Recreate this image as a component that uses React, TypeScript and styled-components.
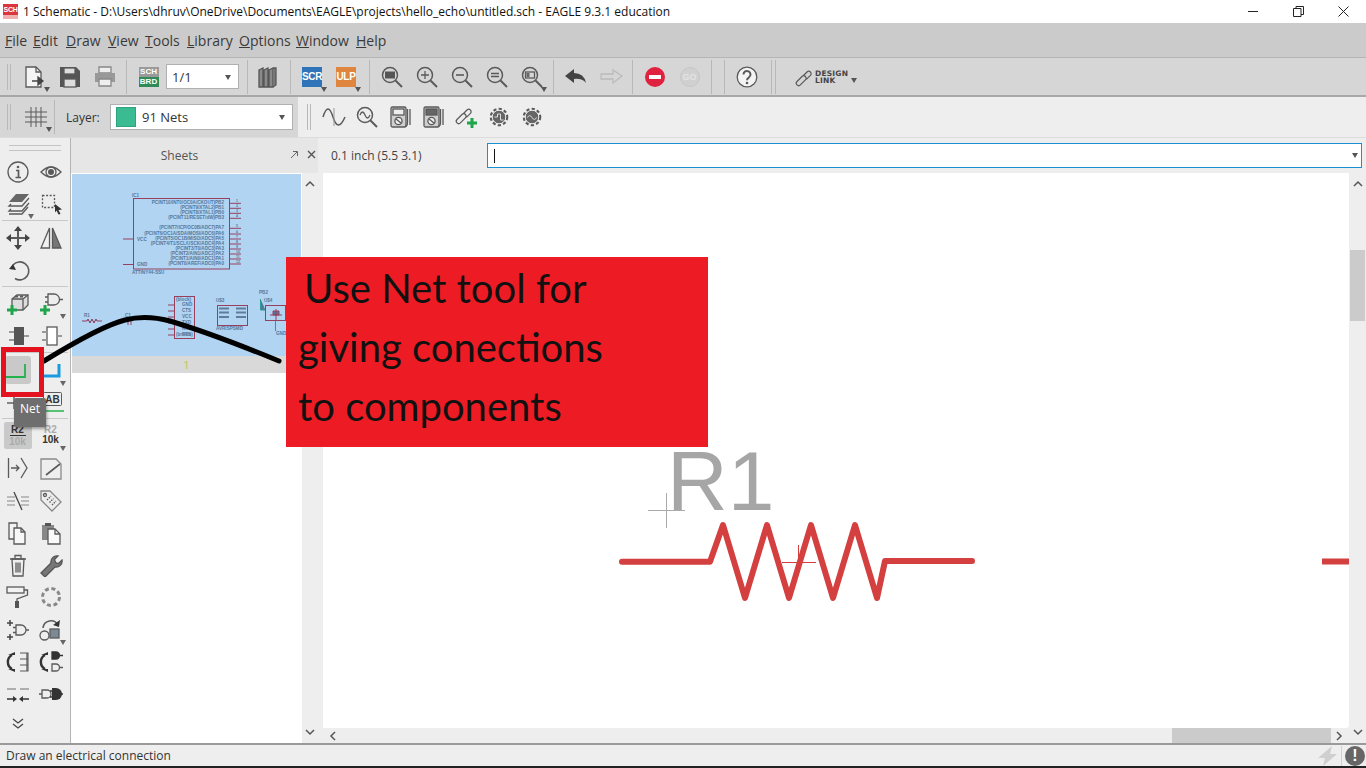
import { FC, ReactNode } from 'react'
import styled, { createGlobalStyle } from 'styled-components'

const UI_FONT = '"Open Sans", "Noto Sans", "Liberation Sans", sans-serif'

const GlobalStyle = createGlobalStyle`
  html, body {
    margin: 0;
    padding: 0;
    background: #eeeeee;
    overflow: hidden;
  }
  * {
    box-sizing: border-box;
  }
`

const Window = styled.div`
  position: relative;
  width: 1366px;
  height: 768px;
  display: flex;
  flex-direction: column;
  overflow: hidden;
  background: #eeeeee;
  color: #333;
  font-family: ${UI_FONT};
`

/* title bar */
const TitleBar = styled.div`
  height: 23px;
  flex: none;
  background: #fff;
  display: flex;
  align-items: center;
  padding-left: 3px;
`
const AppIcon = styled.div`
  width: 15px;
  height: 15px;
  margin-right: 5px;
  background: #d9363e;
  color: #fff;
  font-size: 7px;
  font-weight: 700;
  line-height: 11px;
  letter-spacing: -0.3px;
  text-align: center;
  border-bottom: 4px solid #f0b0b0;
  font-family: 'Liberation Sans', sans-serif;
`
const TitleText = styled.div`
  font-size: 12px;
  color: #111;
  white-space: nowrap;
`
const WindowButtons = styled.div`
  margin-left: auto;
  display: flex;
  height: 100%;
`
const WindowButton = styled.div`
  width: 45px;
  display: flex;
  align-items: center;
  justify-content: center;
`

/* menu */
const MenuBar = styled.div`
  height: 35px;
  flex: none;
  background: #cbcbcb;
  display: flex;
  align-items: center;
  padding-left: 5px;
  border-bottom: 1px solid #b4b4b4;
`
const MenuItem = styled.div<{ $w: number }>`
  width: ${({ $w }) => $w}px;
  font-size: 14px;
  color: #3a3a3a;
`

/* toolbars */
const Toolbar = styled.div`
  height: 39px;
  flex: none;
  background: #d6d6d6;
  display: flex;
  align-items: center;
  border-bottom: 2px solid #a8a8a8;
`
const SecondRow = styled.div`
  height: 41px;
  flex: none;
  display: flex;
  background: #eeeeee;
  border-bottom: 1px solid #dcdcdc;
`
const SecondLeft = styled.div`
  width: 298px;
  background: #d6d6d6;
  display: flex;
  align-items: center;
`
const SecondRight = styled.div`
  flex: 1;
  margin-left: 2px;
  display: flex;
  align-items: center;
`
const Grip = styled.div`
  width: 4px;
  height: 26px;
  margin-left: 7px;
  margin-right: 6px;
  flex: none;
  border-left: 1px solid #b8b8b8;
  border-right: 1px solid #b8b8b8;
`
const Sep = styled.div<{ $l?: number; $r?: number }>`
  width: 1px;
  height: 34px;
  flex: none;
  background: #b8b8b8;
  margin-left: ${({ $l }) => $l ?? 4}px;
  margin-right: ${({ $r }) => $r ?? 4}px;
`
const Tool = styled.div<{ $w?: number; $drop?: boolean }>`
  position: relative;
  width: ${({ $w }) => $w ?? 35}px;
  height: 30px;
  flex: none;
  display: flex;
  align-items: center;
  justify-content: center;
  ${({ $drop }) =>
    $drop &&
    `&::after {
      content: '';
      position: absolute;
      right: 2px;
      bottom: 0;
      border-left: 3.5px solid transparent;
      border-right: 3.5px solid transparent;
      border-top: 5px solid #555;
    }`}
`
const Combo = styled.div<{ $w: number; $h: number }>`
  position: relative;
  width: ${({ $w }) => $w}px;
  height: ${({ $h }) => $h}px;
  flex: none;
  background: #fff;
  border: 1px solid #b0b0b0;
  display: flex;
  align-items: center;
  font-size: 13px;
  color: #333;
  padding-left: 5px;
  &::after {
    content: '';
    position: absolute;
    right: 7px;
    top: 50%;
    margin-top: -2px;
    border-left: 3.5px solid transparent;
    border-right: 3.5px solid transparent;
    border-top: 5px solid #555;
  }
`
const Swatch = styled.span`
  width: 20px;
  height: 20px;
  margin-right: 6px;
  background: #3bbb91;
  border: 1px solid #2ea37d;
`
const LayerLabel = styled.div`
  font-size: 12px;
  color: #333;
  width: 44px;
  margin-left: 11px;
`
const Badge = styled.div<{ $bg: string }>`
  width: 20px;
  height: 20px;
  background: ${({ $bg }) => $bg};
  color: #fff;
  font-size: 10px;
  font-weight: 700;
  display: flex;
  align-items: center;
  justify-content: center;
  font-family: 'Liberation Sans', sans-serif;
  letter-spacing: -0.3px;
`
const SchBrd = styled.div`
  width: 20px;
  height: 20px;
  display: flex;
  flex-direction: column;
  color: #fff;
  font-family: 'Liberation Sans', sans-serif;
  font-size: 8px;
  font-weight: 700;
  line-height: 10px;
  text-align: center;
`
const SchTop = styled.div`
  background: #9a9a9a;
`
const SchBottom = styled.div`
  background: #2e8b57;
`
const RoundStop = styled.div`
  width: 20px;
  height: 20px;
  border-radius: 50%;
  background: #e0213f;
  display: flex;
  align-items: center;
  justify-content: center;
  &::before {
    content: '';
    width: 12px;
    height: 4px;
    background: #fff;
  }
`
const RoundGo = styled.div`
  width: 20px;
  height: 20px;
  border-radius: 50%;
  background: #d0d0d0;
  border: 1px solid #c6c6c6;
  color: #e4e4e4;
  font-size: 9px;
  font-weight: 700;
  display: flex;
  align-items: center;
  justify-content: center;
  font-family: 'Liberation Sans', sans-serif;
`
const DesignLink = styled.div`
  display: flex;
  align-items: center;
  margin-left: 14px;
  position: relative;
`
const DesignText = styled.div`
  font-family: 'DejaVu Sans', sans-serif;
  font-size: 7.5px;
  font-weight: 700;
  line-height: 7px;
  color: #444;
  margin-left: 3px;
  width: 36px;
  letter-spacing: 0.2px;
`
const SmallCaret = styled.span`
  border-left: 3.5px solid transparent;
  border-right: 3.5px solid transparent;
  border-top: 5px solid #555;
  margin-top: 7px;
`

/* body */
const Body = styled.div`
  flex: 1;
  min-height: 0;
  display: flex;
`
const LeftTools = styled.div`
  width: 71px;
  flex: none;
  background: #eeeeee;
  border-right: 1px solid #b4b4b4;
  padding-top: 7px;
  display: flex;
  flex-direction: column;
`
const ToolGrip = styled.div`
  height: 6px;
  margin: 0 9px 4px;
  border-top: 1px solid #c4c4c4;
  border-bottom: 1px solid #c4c4c4;
`
const ToolRow = styled.div<{ $h: number; $sep?: boolean }>`
  height: ${({ $h }) => $h}px;
  flex: none;
  display: flex;
  padding-left: 1px;
  align-items: center;
  ${({ $sep }) => $sep && 'border-bottom: 1px solid #c8c8c8; margin: 0 2px; padding-left: 0;'}
`
const LeftTool = styled.div<{ $active?: boolean; $drop?: boolean }>`
  position: relative;
  width: 33px;
  height: 100%;
  display: flex;
  align-items: center;
  justify-content: center;
  ${({ $drop }) =>
    $drop &&
    `&::after {
      content: '';
      position: absolute;
      right: 1px;
      bottom: 1px;
      border-left: 3px solid transparent;
      border-right: 3px solid transparent;
      border-top: 5px solid #666;
    }`}
`
const ActiveBack = styled.div`
  width: 26px;
  height: 28px;
  border-radius: 3px;
  background: #c9c9c9;
  display: flex;
  align-items: center;
  justify-content: center;
`
const ValueTool = styled.div<{ $on?: boolean }>`
  width: 28px;
  height: 27px;
  border-radius: 2px;
  background: ${({ $on }) => ($on ? '#c9c9c9' : 'transparent')};
  font-family: 'Liberation Sans', sans-serif;
  font-size: 10px;
  font-weight: 700;
  line-height: 10px;
  text-align: center;
  padding-top: 3px;
`
const ValueLine = styled.div<{ $c: string; $line?: boolean }>`
  color: ${({ $c }) => $c};
  ${({ $line }) => $line && 'border-bottom: 1px solid #333; margin: 0 6px 1px;'}
`

const SheetsPanel = styled.div`
  width: 247px;
  flex: none;
  display: flex;
  flex-direction: column;
  background: #eeeeee;
`
const SheetsHeader = styled.div`
  position: relative;
  height: 35px;
  flex: none;
  display: flex;
  align-items: center;
  justify-content: center;
  font-size: 12px;
  color: #555;
  padding-right: 30px;
  background: #e6e6e6;
`
const SheetsActions = styled.div`
  position: absolute;
  right: 2px;
  top: 12px;
  display: flex;
  gap: 8px;
`
const SheetsBody = styled.div`
  flex: 1;
  display: flex;
  min-height: 0;
`
const SheetList = styled.div`
  flex: 1;
  background: #fff;
  padding: 1px 1px 0 1px;
`
const SheetThumb = styled.div`
  height: 182px;
  background: #b0d4f2;
`
const SheetLabel = styled.div`
  height: 17px;
  background: #d9d9d9;
  color: #b8c84a;
  font-size: 11px;
  line-height: 17px;
  text-align: center;
`
const VScroll = styled.div<{ $w: number }>`
  width: ${({ $w }) => $w}px;
  flex: none;
  position: relative;
  display: flex;
  flex-direction: column;
  justify-content: space-between;
  align-items: center;
  padding: 6px 0;
  background: #eeeeee;
`
const VThumb = styled.div`
  position: absolute;
  left: 1px;
  right: 1px;
  top: 77px;
  height: 71px;
  background: #cbcbcb;
`

const RightColumn = styled.div`
  flex: 1;
  min-width: 0;
  display: flex;
  flex-direction: column;
  padding-left: 5px;
`
const CommandRow = styled.div`
  height: 35px;
  flex: none;
  display: flex;
  align-items: center;
  padding-left: 8px;
  font-size: 12px;
  color: #444;
`
const Coordinates = styled.div`
  width: 156px;
  flex: none;
`
const CommandInput = styled.div`
  position: relative;
  width: 875px;
  height: 25px;
  flex: none;
  background: #fff;
  border: 1px solid #1a8fd1;
  display: flex;
  align-items: center;
  padding-left: 6px;
  &::before {
    content: '';
    width: 1px;
    height: 14px;
    background: #111;
  }
  &::after {
    content: '';
    position: absolute;
    right: 3px;
    top: 9px;
    border-left: 3.5px solid transparent;
    border-right: 3.5px solid transparent;
    border-top: 5px solid #555;
  }
`
const CanvasArea = styled.div`
  flex: 1;
  min-height: 0;
  display: flex;
`
const CanvasColumn = styled.div`
  flex: 1;
  min-width: 0;
  display: flex;
  flex-direction: column;
`
const Canvas = styled.div`
  flex: 1;
  min-height: 0;
  background: #fff;
  border-bottom-right-radius: 3px;
`
const CanvasSvg = styled.svg`
  display: block;
`
const HScroll = styled.div`
  height: 15px;
  flex: none;
  position: relative;
  display: flex;
  align-items: center;
  justify-content: space-between;
  padding: 0 5px;
`
const HThumb = styled.div`
  position: absolute;
  left: 849px;
  top: 0;
  width: 159px;
  height: 15px;
  background: #cbcbcb;
`

const StatusBar = styled.div`
  height: 23px;
  flex: none;
  display: flex;
  align-items: center;
  padding-left: 6px;
  font-size: 12px;
  color: #333;
  background: #eeeeee;
  border-top: 2px solid #9a9a9a;
`
const StatusEnd = styled.div`
  margin-left: auto;
  display: flex;
  align-items: center;
  margin-right: 1px;
`
const StatusDivider = styled.div`
  width: 1px;
  height: 20px;
  background: #d0d0d0;
  margin: 0 3px 0 3px;
`
const WarnDot = styled.div`
  width: 20px;
  height: 20px;
  border-radius: 50%;
  background: #666;
  color: #fff;
  font-size: 16px;
  font-weight: 700;
  text-align: center;
  line-height: 20px;
  font-family: 'Liberation Sans', sans-serif;
`
const BlackEdge = styled.div`
  height: 2px;
  flex: none;
  background: #222;
`

/* annotation drawn over the screenshot */
const Callout = styled.div`
  position: absolute;
  left: 286px;
  top: 257px;
  width: 422px;
  height: 190px;
  background: #ed1c24;
  color: #111;
  font-family: Lato, 'Open Sans', sans-serif;
  font-size: 40px;
  line-height: 59px;
  padding: 2px 0 0 12px;
`
const CalloutFirst = styled.div`
  padding-left: 6px;
`
const RedFrame = styled.div`
  position: absolute;
  left: 1px;
  top: 347px;
  width: 43px;
  height: 50px;
  border: 5px solid #e3121e;
`
const NetTip = styled.div`
  position: absolute;
  left: 14px;
  top: 398px;
  width: 32px;
  height: 29px;
  border-radius: 2px;
  background: #6e6e6e;
  color: #fff;
  font-size: 12px;
  line-height: 22px;
  text-align: center;
  box-shadow: 1px 2px 3px rgba(0, 0, 0, 0.35);
`
const CurveSvg = styled.svg`
  position: absolute;
  left: 0;
  top: 0;
  pointer-events: none;
`

/* icons */
const G = '#5a5a5a'
const Ico: FC<{ w?: number; h?: number; children: ReactNode }> = ({ w = 24, h = 24, children }) => (
  <svg width={w} height={h} viewBox={`0 0 ${w} ${h}`} fill="none" stroke={G} strokeWidth="1.3">
    {children}
  </svg>
)
const Plus: FC<{ x: number; y: number }> = ({ x, y }) => (
  <path d={`M${x - 5} ${y}h10M${x} ${y - 5}v10`} stroke="#1fa64a" strokeWidth="3" />
)
const Lens: FC<{ children?: ReactNode }> = ({ children }) => (
  <Ico>
    <circle cx="10" cy="10" r="7.5" strokeWidth="1.5" />
    <path d="M15.5 15.5L22 22" strokeWidth="2" />
    {children}
  </Ico>
)
const Gate: FC<{ x: number; y: number; fill?: string }> = ({ x, y, fill = 'none' }) => (
  <path
    d={`M${x} ${y}h5a5 5 0 0 1 0 10h-5zM${x + 10} ${y + 5}h3M${x - 3} ${y + 2.5}h3M${x - 3} ${y + 7.5}h3`}
    fill={fill}
  />
)
const Meter: FC<{ wave?: boolean }> = ({ wave }) => (
  <Ico>
    <rect x="3" y="2" width="15" height="20" rx="1.5" fill="#cfcfcf" />
    <rect x="5" y="4" width="11" height="6" fill={wave ? '#666' : '#eee'} />
    <circle cx="10.5" cy="16" r="3.6" fill="#eee" />
    <path d="M8 14l5 4M19.5 4v14q0 3 -3 4M22 4v16" />
  </Ico>
)
const Chain: FC = () => (
  <>
    <path
      d="M3 14.5l5-5a2.4 2.4 0 0 1 3.4 3.4l-5 5a2.4 2.4 0 0 1-3.4-3.4zM9 9l4-4a2.4 2.4 0 0 1 3.4 3.4l-4 4"
      strokeWidth="1.2"
    />
  </>
)
const GearIcon: FC<{ wave?: boolean }> = ({ wave }) => (
  <Ico>
    <circle cx="12" cy="12" r="8" strokeWidth="2.6" strokeDasharray="3.1 2.2" />
    <circle cx="12" cy="12" r="6.8" fill="#666" stroke="#eee" strokeWidth="1" />
    <path d={wave ? 'M7.5 12.5q2-4 4.5 0t4.500 0' : 'M7.500 12h3v-3h3v6h3'} stroke="#ddd" strokeWidth="1" />
  </Ico>
)

const icons: Record<string, ReactNode> = {
  info: (
    <Ico>
      <circle cx="12" cy="12" r="10" />
      <path d="M10 10.500h2.500v7M9.500 17.500h5.500" strokeWidth="1.700" />
      <circle cx="12" cy="7" r="1.300" fill={G} stroke="none" />
    </Ico>
  ),
  eye: (
    <Ico>
      <path d="M2 12q10-10 20 0q-10 10-20 0z" strokeWidth="1.400" />
      <circle cx="12" cy="12" r="5" strokeWidth="1.300" />
      <circle cx="12" cy="12" r="3" fill={G} stroke="none" />
    </Ico>
  ),
  layers: (
    <Ico>
      <path d="M9 2h13l-7 8H2z" fill="#666" stroke="none" />
      <path d="M4 12l-2 2h13l7-8M4 17l-2 2h13l7-8" />
      <path d="M2 22h13l6-7" />
    </Ico>
  ),
  select: (
    <Ico>
      <rect x="2.500" y="3.500" width="12" height="12" strokeDasharray="2 1.600" />
      <path d="M15 12l7 5.500-3.500.5 2 4-2 .5-2-4-1.500 2z" fill="#333" stroke="none" />
    </Ico>
  ),
  move: (
    <Ico>
      <path d="M12 3v18M3 12h18" strokeWidth="2" />
      <path d="M12 0l4 5H8zM12 24l4-5H8zM0 12l5-4v8zM24 12l-5-4v8z" fill="#444" stroke="none" />
    </Ico>
  ),
  mirror: (
    <Ico>
      <path d="M10.500 2v20H2z" fill="#f0f0f0" />
      <path d="M13.500 2v20H22z" fill="#777" />
    </Ico>
  ),
  rotate: (
    <Ico>
      <path d="M6 7a9 9 0 1 1 2 13.500" strokeWidth="1.600" />
      <path d="M2 11l7 1-3-6z" fill="#333" stroke="none" />
    </Ico>
  ),
  addPart: (
    <Ico>
      <path d="M6 7l5-4h11v10l-5 5H6z" fill="#ddd" />
      <path d="M6 7h11v11M17 7l5-4" />
      <path d="M9 4.500h3M14 4.500h3" strokeWidth="2" />
      <Plus x={6} y={18} />
    </Ico>
  ),
  addGate: (
    <Ico>
      <path d="M9 2h6a5.500 5.500 0 0 1 0 11H9zM20.500 7.500H24M6 5h3M6 10h3" />
      <Plus x={6} y={18} />
    </Ico>
  ),
  smash: (
    <Ico>
      <rect x="7" y="3" width="10" height="18" fill="#555" stroke="none" />
      <path d="M2 8h5M2 16h5M17 12h5" strokeWidth="2" stroke="#999" />
    </Ico>
  ),
  unsmash: (
    <Ico>
      <rect x="7" y="3" width="10" height="18" fill="#fff" />
      <path d="M2 8h5M2 16h5M17 12h5" strokeWidth="2" stroke="#999" />
    </Ico>
  ),
  net: (
    <Ico>
      <path d="M0 19h19V6" stroke="#24b24e" strokeWidth="1.800" />
    </Ico>
  ),
  bus: (
    <Ico>
      <path d="M1 18h19V6" stroke="#1a9be0" strokeWidth="3" />
    </Ico>
  ),
  junction: (
    <Ico>
      <path d="M0 12h24" strokeWidth="1.400" />
      <path d="M7 6v12" strokeWidth="1.400" />
    </Ico>
  ),
  label: (
    <svg width="24" height="24" viewBox="0 0 24 24" fill="none">
      <rect x="3.500" y="1.500" width="18" height="13" rx="1" stroke={G} />
      <text x="12.500" y="12" textAnchor="middle" fontSize="10" fontWeight="700" fontFamily="Liberation Sans" fill="#333">
        AB
      </text>
      <path d="M0 20h24" stroke="#24b24e" strokeWidth="1.500" />
    </svg>
  ),
  pinswap: (
    <Ico>
      <path d="M2.500 2v20" />
      <path d="M5 12h8M10 9l3 3-3 3" />
      <path d="M15 2l6 10-6 10" />
    </Ico>
  ),
  slash: (
    <Ico>
      <path d="M2 3h15l5 5v15H2z" stroke="#8a8a8a" />
      <path d="M7 19l14-11" strokeWidth="1.600" />
    </Ico>
  ),
  split: (
    <Ico>
      <path d="M1 8h8M1 12h8M1 16h8M15 8h8M15 12h8M15 16h8" stroke="#aaa" />
      <path d="M8 3l8 18" stroke="#444" />
    </Ico>
  ),
  tag: (
    <Ico>
      <path d="M2 2h9l11 11-9 9L2 11z" stroke="#888" />
      <circle cx="6" cy="6" r="1.500" />
      <path d="M8 11l4-4M10.500 13.500l4-4M13 16l4-4" strokeDasharray="1.500 1" />
    </Ico>
  ),
  copy: (
    <Ico>
      <path d="M3 2h8v16H3z" fill="#f2f2f2" />
      <path d="M8 7h7l4 4v12H8z" fill="#f7f7f7" />
      <path d="M15 7v4h4" />
    </Ico>
  ),
  paste: (
    <Ico>
      <path d="M3 4h12v15H3z" fill="#888" stroke="none" />
      <path d="M6 2h6v3H6z" fill="#555" stroke="none" />
      <path d="M9 8h7l5 5v10H9z" fill="#fafafa" />
      <path d="M16 8v5h5" />
    </Ico>
  ),
  trash: (
    <Ico>
      <path d="M4 6h16M9 5V2.500h6V5" />
      <path d="M6 6l1 17h10l1-17z" />
      <path d="M10 9.500v10M12 9.500v10M14 9.500v10" />
    </Ico>
  ),
  wrench: (
    <Ico>
      <path
        d="M2 20l10-10a6 6 0 0 1 7-7l-3.500 3.500 1 3 3 1 3.500-3.500a6 6 0 0 1-7 7L6 24z"
        fill="#777"
        stroke="#555"
      />
    </Ico>
  ),
  roller: (
    <Ico>
      <rect x="1" y="2" width="17" height="6" fill="#f2f2f2" />
      <path d="M18 5h3.500v5L11 14v3" />
      <rect x="9" y="16" width="4" height="7" fill="#555" stroke="none" />
    </Ico>
  ),
  circleDots: (
    <Ico>
      <circle cx="12" cy="12" r="8.500" stroke="#888" strokeWidth="3" strokeDasharray="4 2.700" />
    </Ico>
  ),
  addGates: (
    <Ico>
      <path d="M1 5h6M4 2v6M1 19h6M4 16v6" stroke="#444" strokeWidth="1.500" />
      <path d="M10 7h5a5 5 0 0 1 0 10h-5zM20 12h3M7 9.500h3M7 14.500h3" />
    </Ico>
  ),
  rotGroup: (
    <Ico>
      <path d="M4 10a8 8 0 0 1 15-3" strokeWidth="1.600" />
      <path d="M21 2l-1 7-6-2z" fill="#333" stroke="none" />
      <circle cx="5.500" cy="17.500" r="4.500" />
      <rect x="11" y="11" width="9" height="9" fill="#7a8a96" />
    </Ico>
  ),
  swapPins: (
    <Ico>
      <path d="M6 5a8 8 0 0 0 0 14" strokeWidth="2.400" stroke="#333" />
      <path d="M2 5h7v-3zM2 19h7v3z" fill="#333" stroke="none" />
      <path d="M14 3h8v18h-8M14 9h8M14 15h8" strokeWidth="1.100" />
      <path d="M21 3v18" />
    </Ico>
  ),
  swapGates: (
    <Ico>
      <path d="M6 5a8 8 0 0 0 0 14" strokeWidth="2.400" stroke="#333" />
      <path d="M2 5h7v-3zM2 19h7v3z" fill="#333" stroke="none" />
      <path d="M13 2h4a3.500 3.500 0 0 1 0 7h-4zM21 5.500h3" fill="#333" stroke="#333" />
      <path d="M13 14h4a3.500 3.500 0 0 1 0 7h-4zM21 17.500h3" />
    </Ico>
  ),
  wireBreak: (
    <Ico>
      <path d="M1 7h9M14 7h9" stroke="#999" strokeWidth="1.500" />
      <path d="M1 17h8M23 17h-8" stroke="#333" />
      <path d="M11 17l-4-3v6zM13 17l4-3v6z" fill="#333" stroke="none" />
    </Ico>
  ),
  gateFill: (
    <Ico>
      <path d="M3 8h5a4 4 0 0 1 0 8H3zM0 12h3" />
      <path d="M13 6h4a6 6 0 0 1 0 12h-4z" fill="#333" stroke="none" />
      <path d="M22 12h2M11 9h2M11 15h2" stroke="#333" strokeWidth="1.500" />
    </Ico>
  ),
  chevrons: (
    <Ico h={14}>
      <path d="M7 2l5 4 5-4M7 7l5 4 5-4" stroke="#444" />
    </Ico>
  )
}

const leftRows: { h: number; sep?: boolean; a: string; b: string; dropA?: boolean; dropB?: boolean }[] = [
  { h: 33, a: 'info', b: 'eye' },
  { h: 33, sep: true, a: 'layers', b: 'select', dropA: true },
  { h: 33, a: 'move', b: 'mirror' },
  { h: 33, sep: true, a: 'rotate', b: '' },
  { h: 33, a: 'addPart', b: 'addGate', dropB: true },
  { h: 33, sep: true, a: 'smash', b: 'unsmash' },
  { h: 34, a: 'net', b: 'bus', dropB: true },
  { h: 32, sep: true, a: 'junction', b: 'label' },
  { h: 33, a: 'R2', b: 'R2v', dropB: true },
  { h: 32, a: 'pinswap', b: 'slash' },
  { h: 33, a: 'split', b: 'tag' },
  { h: 32, a: 'copy', b: 'paste' },
  { h: 32, a: 'trash', b: 'wrench' },
  { h: 32, a: 'roller', b: 'circleDots' },
  { h: 33, a: 'addGates', b: 'rotGroup', dropB: true },
  { h: 32, a: 'swapPins', b: 'swapGates' },
  { h: 32, a: 'wireBreak', b: 'gateFill' }
]

const renderLeftIcon = (name: string) => {
  if (name === 'R2')
    return (
      <ValueTool $on>
        <ValueLine $c="#333" $line>R2</ValueLine>
        <ValueLine $c="#aaa">10k</ValueLine>
      </ValueTool>
    )
  if (name === 'R2v')
    return (
      <ValueTool>
        <ValueLine $c="#aaa">R2</ValueLine>
        <ValueLine $c="#333">10k</ValueLine>
      </ValueTool>
    )
  if (name === 'net') return <ActiveBack>{icons.net}</ActiveBack>
  return icons[name] ?? null
}

const menus: [string, string, number][] = [
  ['F', 'ile', 28],
  ['E', 'dit', 33],
  ['D', 'raw', 42],
  ['V', 'iew', 37],
  ['T', 'ools', 42],
  ['L', 'ibrary', 52],
  ['O', 'ptions', 57],
  ['W', 'indow', 60],
  ['H', 'elp', 40]
]

const rightPins = [203.3, 208.3, 213.3, 218.3, 228.3, 234, 239, 244, 249, 254, 259, 264]
const pinNames = [
  'PCINT10/INT0/OC0A/CKOUT)PB2',
  '(PCINT9/XTAL2)PB1',
  '(PCINT8/XTAL1)PB0',
  '(PCINT11/RESET/dW)PB3',
  '(PCINT7/ICP/OC0B/ADC7)PA7',
  '(PCINT6/OC1A/SDA/MOSI/ADC6)PA6',
  '(PCINT5/OC1B/MISO/ADC5)PA5',
  '(PCINT4/T1/SCL/USCK/ADC4)PA4',
  '(PCINT3/T0/ADC3)PA3',
  '(PCINT2/AIN1/ADC2)PA2',
  '(PCINT1/AIN0/ADC1)PA1',
  '(PCINT0/AREF/ADC0)PA0'
]
const WINE = '#96405e'
const INK = '#55789c'

const Thumbnail: FC = () => (
  <CanvasSvg width="229" height="182" viewBox="72 174 229 182" fontFamily="Liberation Sans">
    <g fill={INK} fontSize="4.600" fontWeight="700">
      <rect x="133.500" y="198.500" width="96" height="70.500" fill="none" stroke={WINE} />
      {rightPins.map((y, i) => (
        <g key={y}>
          <path d={`M229 ${y}h12`} stroke={WINE} />
          <text x="224" y={y + 1} textAnchor="end">
            {pinNames[i]}
          </text>
          <text x="236" y={y - 1} fontSize="3.500">
            {i + 1}
          </text>
        </g>
      ))}
      <path d={`M123 239h10M123 264.500h10`} stroke={WINE} />
      <text x="137" y="241">VCC</text>
      <text x="137" y="266">GND</text>
      <text x="132" y="197">IC1</text>
      <text x="132" y="274">ATTINY44-SSU</text>
      <path d="M82 321h5l1-2 2 4 2-4 2 4 2-4 1 2h5" stroke={WINE} />
      <text x="84" y="317">R1</text>
      <text x="125" y="317">C1</text>
      <path d="M128 321v4M131 321v4" stroke={WINE} />
      <rect x="174.500" y="296.500" width="20" height="42" fill="none" stroke={WINE} />
      <text x="176" y="301">(block)</text>
      {['GND', 'CTS', 'VCC', 'TXD', 'RXD', 'RTS'].map((t, i) => (
        <g key={t}>
          <path d={`M168 ${305 + i * 6}h6`} stroke={WINE} />
          <text x="182" y={306 + i * 6}>{t}</text>
        </g>
      ))}
      <text x="176" y="336">(brown)</text>
      <rect x="217.500" y="305.500" width="30" height="20" fill="none" stroke={WINE} />
      <path d="M219 308.500h10M236 308.500h10M219 312.500h10M236 312.500h10M219 317h10M236 317h10" stroke="#5f7c9a" strokeWidth="2" />
      <text x="216" y="302">U$3</text>
      <text x="216" y="330">AVRISPSMD</text>
      <text x="259" y="294">PB2</text>
      <text x="264" y="302">U$4</text>
      <path d="M260.500 299v11h5" stroke="#2f9a8e" />
      <rect x="265.500" y="305.500" width="20" height="15" fill="none" stroke={WINE} />
      <path d="M270 315h12M276 309v12M273 311h6v4h-6z" stroke={WINE} />
      <path d="M275.500 321v10" stroke="#2f9a8e" />
      <text x="276" y="335">GND</text>
    </g>
  </CanvasSvg>
)

const ResistorCanvas: FC = () => (
  <CanvasSvg width="1026" height="554" viewBox="323 173 1026 554">
    <text x="667" y="510" fontFamily="Liberation Sans" fontSize="84" fill="#a6a6a6">
      R1
    </text>
    <path d="M648 510.500h37M666.500 493v35" stroke="#aaa" strokeWidth="1" />
    <path
      d="M622 561.700h88L723 525l22 73 22-73 22 73 22-73 22 73 22-73 22 73 8-37h87"
      stroke="#d43f3f"
      strokeWidth="6"
      strokeLinecap="round"
      strokeLinejoin="round"
      fill="none"
    />
    <path d="M782 562.500h34M798.500 545v17" stroke="#d43f3f" strokeWidth="1" />
    <path d="M1322 561.500h27" stroke="#d43f3f" strokeWidth="6" />
  </CanvasSvg>
)

const Arrow: FC<{ d: string }> = ({ d }) => (
  <svg width="10" height="10" viewBox="0 0 10 10" fill="none" stroke="#555" strokeWidth="1.500">
    <path d={d} />
  </svg>
)

const App: FC = () => (
  <Window>
    <GlobalStyle />
    <TitleBar>
      <AppIcon>SCH</AppIcon>
      <TitleText>
        1 Schematic - D:\Users\dhruv\OneDrive\Documents\EAGLE\projects\hello_echo\untitled.sch - EAGLE 9.3.1 education
      </TitleText>
      <WindowButtons>
        <WindowButton>
          <svg width="11" height="11" viewBox="0 0 11 11" stroke="#222" fill="none">
            <path d="M0 5.500h10" />
          </svg>
        </WindowButton>
        <WindowButton>
          <svg width="11" height="11" viewBox="0 0 11 11" stroke="#222" fill="none">
            <path d="M.500 2.500h7.500v8H.500zM3 2.500V.500h7.500v8H8" />
          </svg>
        </WindowButton>
        <WindowButton>
          <svg width="11" height="11" viewBox="0 0 11 11" stroke="#222" fill="none">
            <path d="M.500.500l10 10M10.500.500l-10 10" />
          </svg>
        </WindowButton>
      </WindowButtons>
    </TitleBar>

    <MenuBar>
      {menus.map(([key, rest, w]) => (
        <MenuItem key={key} $w={w}>
          <u>{key}</u>
          {rest}
        </MenuItem>
      ))}
    </MenuBar>

    <Toolbar>
      <Grip />
      <Tool $drop>
        <Ico>
          <path d="M3 2h10l5 5v15H3z" fill="#f4f4f4" />
          <path d="M13 2v5h5" />
          <path d="M9 16h9M15 12l5 4-5 4z" fill="#444" stroke="#444" />
        </Ico>
      </Tool>
      <Tool>
        <Ico>
          <path d="M2 2h16l4 4v16H2z" fill="#555" stroke="none" />
          <rect x="6" y="3" width="11" height="6" fill="#ddd" />
          <rect x="6" y="14" width="12" height="8" fill="#ddd" />
        </Ico>
      </Tool>
      <Tool>
        <Ico>
          <path d="M6 2h12v6H6z" fill="#eee" stroke="#888" />
          <path d="M2 8h20v9H2z" fill="#999" stroke="none" />
          <path d="M6 14h12v7H6z" fill="#eee" stroke="#888" />
        </Ico>
      </Tool>
      <Sep />
      <Tool>
        <SchBrd>
          <SchTop>SCH</SchTop>
          <SchBottom>BRD</SchBottom>
        </SchBrd>
      </Tool>
      <Combo $w={73} $h={25}>
        1/1
      </Combo>
      <Sep $l={8} $r={2} />
      <Tool>
        <Ico>
          <path d="M3 5l4-2v19H3zM8 5l4-2v19H8zM13 5l4-2v19h-4z" fill="#8a8a8a" stroke="#555" />
          <path d="M17 3h3v17l-3 2" fill="#777" />
        </Ico>
      </Tool>
      <Sep $l={5} />
      <Tool $w={34} $drop>
        <Badge $bg="#2f73b8">SCR</Badge>
      </Tool>
      <Tool $w={34} $drop>
        <Badge $bg="#e0853d">ULP</Badge>
      </Tool>
      <Sep $l={6} />
      <Tool>
        <Lens>
          <rect x="5" y="6.500" width="10" height="7" fill="#555" stroke="none" />
        </Lens>
      </Tool>
      <Tool>
        <Lens>
          <path d="M6 10h8M10 6v8" />
        </Lens>
      </Tool>
      <Tool>
        <Lens>
          <path d="M6 10h8" strokeWidth="1.600" />
        </Lens>
      </Tool>
      <Tool>
        <Lens>
          <path d="M6 8.500h8M6 11.500h8" />
        </Lens>
      </Tool>
      <Tool $drop>
        <Lens>
          <rect x="5.500" y="7" width="9" height="6" />
          <rect x="6.500" y="8" width="3" height="4" fill="#666" stroke="none" />
        </Lens>
      </Tool>
      <Sep />
      <Tool>
        <Ico>
          <path d="M1 11l9-7v4q10 0 12 10q-4-5-12-4v4z" fill="#444" stroke="none" />
        </Ico>
      </Tool>
      <Tool>
        <Ico>
          <path d="M23 11l-9-6v4H2v5h12v4z" fill="none" stroke="#bbb" />
        </Ico>
      </Tool>
      <Sep />
      <Tool>
        <RoundStop />
      </Tool>
      <Tool>
        <RoundGo>GO</RoundGo>
      </Tool>
      <Sep />
      <Sep $l={8} $r={4} />
      <Tool>
        <Ico>
          <circle cx="12" cy="12" r="9.800" fill="#f4f4f4" />
          <path d="M8.500 9.500a3.500 3.500 0 1 1 5.500 2.800q-2 1.200-2 3" strokeWidth="2" />
          <circle cx="12" cy="18" r="1.300" fill={G} stroke="none" />
        </Ico>
      </Tool>
      <Sep $l={7} $r={3} />
      <Sep $l={0} />
      <DesignLink>
        <Ico w={18} h={20}>
          <Chain />
        </Ico>
        <DesignText>
          DESIGN
          <br />
          LINK
        </DesignText>
        <SmallCaret />
      </DesignLink>
    </Toolbar>

    <SecondRow>
      <SecondLeft>
        <Grip />
        <Tool $w={37} $drop>
          <Ico>
            <path d="M1 7h22M1 12h22M1 17h22M7 2v20M12 2v20M17 2v20" strokeWidth="1" />
          </Ico>
        </Tool>
        <Sep $l={0} $r={0} />
        <LayerLabel>Layer:</LayerLabel>
        <Combo $w={183} $h={26}>
          <Swatch />
          91 Nets
        </Combo>
      </SecondLeft>
      <SecondRight>
        <Grip />
        <Tool $w={33}>
          <Ico>
            <path d="M1 12q5-16 10 0t12 0" strokeWidth="1.500" />
            <path d="M12 3v18" stroke="#999" strokeWidth="1" />
          </Ico>
        </Tool>
        <Tool $w={33}>
          <Lens>
            <path d="M5 10q2.500-6 5 0t5 0" />
          </Lens>
        </Tool>
        <Tool $w={33}>
          <Meter />
        </Tool>
        <Tool $w={33}>
          <Meter wave />
        </Tool>
        <Tool $w={33}>
          <Ico>
            <Chain />
            <Plus x={18} y={18} />
          </Ico>
        </Tool>
        <Tool $w={33}>
          <GearIcon />
        </Tool>
        <Tool $w={33}>
          <GearIcon wave />
        </Tool>
      </SecondRight>
    </SecondRow>

    <Body>
      <LeftTools>
        <ToolGrip />
        {leftRows.map((row) => (
          <ToolRow key={row.a} $h={row.h} $sep={row.sep}>
            <LeftTool $drop={row.dropA}>{renderLeftIcon(row.a)}</LeftTool>
            <LeftTool $drop={row.dropB}>{renderLeftIcon(row.b)}</LeftTool>
          </ToolRow>
        ))}
        <ToolRow $h={28}>
          <LeftTool>{icons.chevrons}</LeftTool>
        </ToolRow>
      </LeftTools>

      <SheetsPanel>
        <SheetsHeader>
          Sheets
          <SheetsActions>
            <svg width="9" height="9" viewBox="0 0 9 9" fill="none" stroke="#666">
              <path d="M1 8l6-6M3 1.500h4.500V6" />
            </svg>
            <svg width="9" height="9" viewBox="0 0 9 9" fill="none" stroke="#555" strokeWidth="1.400">
              <path d="M1 1l7 7M8 1L1 8" />
            </svg>
          </SheetsActions>
        </SheetsHeader>
        <SheetsBody>
          <SheetList>
            <SheetThumb>
              <Thumbnail />
            </SheetThumb>
            <SheetLabel>1</SheetLabel>
          </SheetList>
          <VScroll $w={16}>
            <Arrow d="M1 7l4-4 4 4" />
            <Arrow d="M1 3l4 4 4-4" />
          </VScroll>
        </SheetsBody>
      </SheetsPanel>

      <RightColumn>
        <CommandRow>
          <Coordinates>0.1 inch (5.5 3.1)</Coordinates>
          <CommandInput />
        </CommandRow>
        <CanvasArea>
          <CanvasColumn>
            <Canvas>
              <ResistorCanvas />
            </Canvas>
            <HScroll>
              <Arrow d="M7 1L3 5l4 4" />
              <HThumb />
              <Arrow d="M3 1l4 4-4 4" />
            </HScroll>
          </CanvasColumn>
          <VScroll $w={17}>
            <Arrow d="M1 7l4-4 4 4" />
            <VThumb />
            <Arrow d="M1 3l4 4 4-4" />
          </VScroll>
        </CanvasArea>
      </RightColumn>
    </Body>

    <StatusBar>
      Draw an electrical connection
      <StatusEnd>
        <svg width="20" height="20" viewBox="0 0 20 20">
          <path d="M14 0L0 12h7l-2 8 14-12h-7z" fill="#cfcfcf" />
        </svg>
        <StatusDivider />
        <WarnDot>!</WarnDot>
      </StatusEnd>
    </StatusBar>
    <BlackEdge />

    <CurveSvg width="1366" height="768" viewBox="0 0 1366 768" fill="none">
      <path
        d="M44 361C70 345 105 325 125 320C140 316 155 317 170 321C200 330 240 345 279 361"
        stroke="#000"
        strokeWidth="5"
        strokeLinecap="round"
      />
    </CurveSvg>
    <RedFrame />
    <NetTip>Net</NetTip>
    <Callout>
      <CalloutFirst>Use Net tool for</CalloutFirst>
      <div>giving conections</div>
      <div>to components</div>
    </Callout>
  </Window>
)

export default App
